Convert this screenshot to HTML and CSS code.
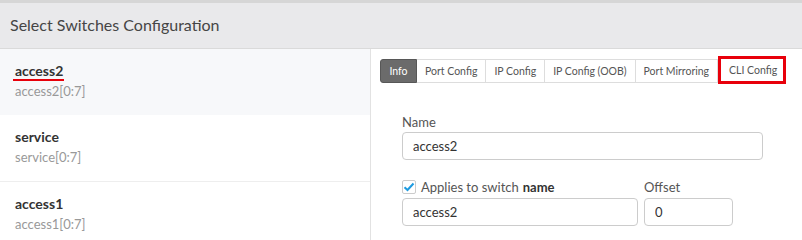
FILE: index.html
```html
<!DOCTYPE html>
<html lang="en">
<head>
    <meta charset="UTF-8">
    <title>Select Switches Configuration</title>
    <link rel="stylesheet" href="styles.css">
</head>
<body>
    <div class="panel">
        <div class="panel-header">Select Switches Configuration</div>
        <div class="panel-body">
            <div class="switch-list">
                <div class="switch-item selected">
                    <div class="switch-name"><span class="marked">access2</span></div>
                    <div class="switch-range">access2[0:7]</div>
                </div>
                <div class="switch-item">
                    <div class="switch-name">service</div>
                    <div class="switch-range">service[0:7]</div>
                </div>
                <div class="switch-item">
                    <div class="switch-name">access1</div>
                    <div class="switch-range">access1[0:7]</div>
                </div>
            </div>

            <div class="switch-detail">
                <div class="tabs">
                    <button class="tab active">Info</button>
                    <button class="tab">Port Config</button>
                    <button class="tab">IP Config</button>
                    <button class="tab">IP Config (OOB)</button>
                    <button class="tab">Port Mirroring</button>
                    <button class="tab highlight">CLI Config</button>
                </div>

                <div class="form">
                    <label class="field-label">Name</label>
                    <input class="field name-field" type="text" value="access2">

                    <div class="form-row">
                        <div class="col-wide">
                            <label class="check-label">
                                <span class="checkbox">
                                    <svg width="12" height="10" viewBox="0 0 12 10"><path d="M1.5 5.2 L4.5 8 L10.5 1.5" fill="none" stroke="#1e9be0" stroke-width="2"/></svg>
                                </span>
                                Applies to switch <b>name</b>
                            </label>
                            <input class="field" type="text" value="access2">
                        </div>
                        <div class="col-narrow">
                            <label class="field-label offset-label">Offset</label>
                            <input class="field" type="text" value="0">
                        </div>
                    </div>
                </div>
            </div>
        </div>
    </div>
</body>
</html>
```

FILE: styles.css
```css
/* General */
body {
    margin: 0;
    font-family: Lato, 'Noto Sans', sans-serif;
    color: #444;
    background-color: #fff;
}

/* Panel */
.panel {
    border-top: 3px solid #d6d6d6;
}
.panel-header {
    height: 45px;
    line-height: 44px;
    padding-left: 10px;
    font-size: 16px;
    color: #454545;
    background-color: #e9e9eb;
    border-bottom: 1px solid #dadada;
}
.panel-body {
    display: flex;
}

/* Switch list */
.switch-list {
    flex: none;
    width: 370px;
    border-right: 1px solid #e2e2e2;
    min-height: 191px;
}
.switch-item {
    padding: 12px 15px 14px;
    border-bottom: 1px solid #eee;
}
.switch-item.selected {
    background-color: #f7f8fa;
    border-bottom: none;
}
.switch-name {
    font-size: 14px;
    font-weight: 700;
    line-height: 20px;
    color: #333;
}
.switch-name .marked {
    display: inline-block;
    line-height: 17px;
    border-bottom: 2px solid #e8000b;
    margin-left: -2px;
    padding: 0 1px 0 2px;
}
.switch-range {
    font-size: 13px;
    line-height: 20px;
    color: #999;
}

/* Detail */
.switch-detail {
    flex: 1;
    min-width: 0;
    padding: 10px 0 0 9px;
}
.tabs {
    display: flex;
    align-items: flex-start;
}
.tab {
    flex: none;
    white-space: nowrap;
    font-family: inherit;
    font-size: 10.5px;
    color: #555;
    background-color: #fff;
    border: 1px solid #ddd;
    border-left: none;
    height: 24px;
    padding: 0 8px;
    margin: 0;
    cursor: pointer;
}
.tab.active {
    width: 37px;
    background-color: #6b6b6b;
    border: 1px solid #575757;
    color: #fff;
    border-radius: 3px 0 0 3px;
}
.tab.highlight {
    width: 62px;
    height: 22px;
    margin-left: 3px;
    border: none;
    outline: 3px solid #e8000b;
}

/* Form */
.form {
    padding: 30px 0 0 22px;
    width: 361px;
}
.field-label {
    display: block;
    font-size: 13px;
    line-height: 18px;
    color: #555;
    margin-bottom: 1px;
}
.field {
    display: block;
    box-sizing: border-box;
    width: 100%;
    height: 28px;
    padding: 0 10px;
    font-family: inherit;
    font-size: 13px;
    color: #333;
    border: 1px solid #ccc;
    border-radius: 4px;
    outline: none;
}
.form-row {
    display: flex;
    gap: 6px;
    margin-top: 17px;
}
.col-wide {
    width: 236px;
}
.col-narrow {
    width: 89px;
}
.check-label {
    display: flex;
    align-items: center;
    height: 20px;
    font-size: 13px;
    color: #555;
    margin-bottom: 1px;
}
.check-label b {
    font-weight: 700;
    color: #333;
    margin-left: 4px;
}
.checkbox {
    display: inline-flex;
    align-items: center;
    justify-content: center;
    width: 12px;
    height: 12px;
    border: 1px solid #ccc;
    border-radius: 2px;
    margin-right: 5px;
}
.offset-label {
    line-height: 20px;
    margin-bottom: 1px;
}
```
